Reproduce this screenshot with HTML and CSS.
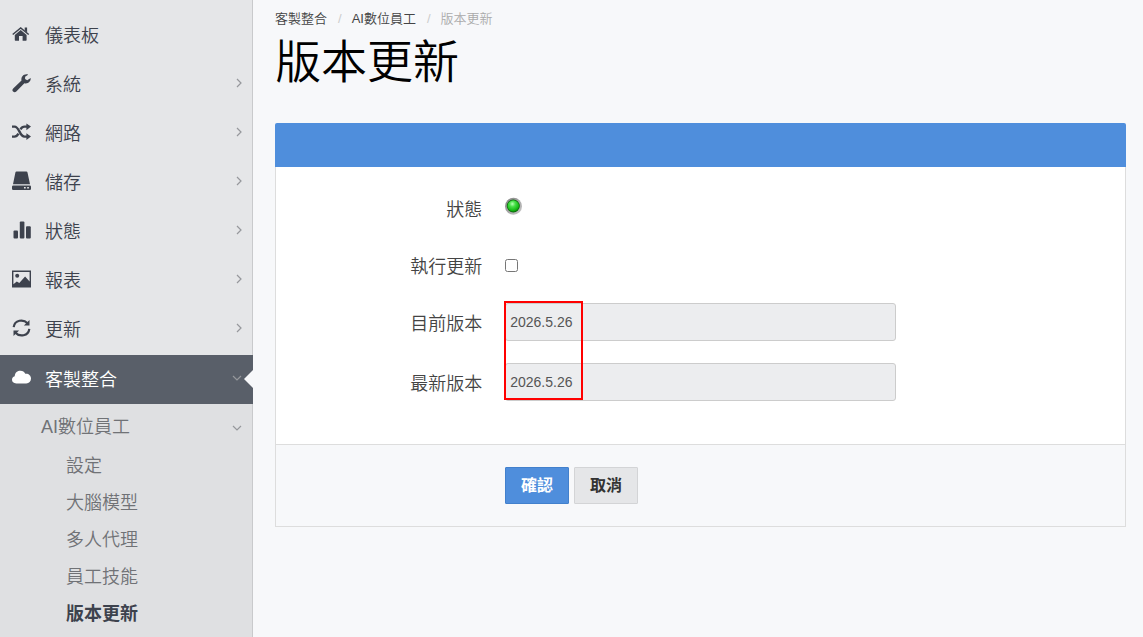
FILE: index.html
```
<!DOCTYPE html>
<html lang="zh-Hant">
<head>
    <meta charset="UTF-8">
    <meta name="viewport" content="width=device-width, initial-scale=1.0">
    <title>版本更新</title>
    <link rel="stylesheet" href="styles.css">
</head>
<body>
    <nav class="sidebar">
        <ul class="menu">
            <li>
                <a href="#">
                    <svg class="icon" viewBox="0 0 20 20"><path d="M2.800 11 8.700 6l5.900 5v5.100q0 .6-.6.600h-3.400v-4.600H7v4.600H3.400q-.6 0-.6-.6z"/><path d="M.700 10.500 8.700 3.900l8 6.600" fill="none" stroke="currentColor" stroke-width="1.500"/><path d="M12.700 3.600h2.400v5l-2.400-2z"/></svg>
                    <span>儀表板</span>
                </a>
            </li>
            <li>
                <a href="#">
                    <svg class="icon" viewBox="0 0 20 20"><path d="M18.700 5.100c.3 3.600-2.800 6.100-6.300 5.200L4.300 18.500c-1 1-2.300 1-3.200.1-.9-.9-.9-2.200.1-3.200l8.300-8C8.700 3.800 11.600.6 15.400 1.200l.7.500-3 2v2.400l2.100 1.200z"/></svg>
                    <span>系統</span>
                    <svg class="angle" viewBox="0 0 10 10"><path d="M3 1l4 4-4 4"/></svg>
                </a>
            </li>
            <li>
                <a href="#">
                    <svg class="icon" viewBox="0 0 20 20"><path d="M0 4.600h2.500C7.500 4.600 7.500 14.600 12.500 14.600H15M0 14.600h2.500c2 0 3-1.300 4-3M8.500 7.300c1-1.700 2-2.700 4-2.700H15" fill="none" stroke="currentColor" stroke-width="2.400"/><path d="M14.400 1.400 19 4.600l-4.600 3.600zM14.400 11.200 19 14.600l-4.600 3.400z"/></svg>
                    <span>網路</span>
                    <svg class="angle" viewBox="0 0 10 10"><path d="M3 1l4 4-4 4"/></svg>
                </a>
            </li>
            <li>
                <a href="#">
                    <svg class="icon" viewBox="0 0 20 20"><path d="M4.500.5h9.800q1 0 1.200 1L18 13.300H1L3.400 1.500q.2-1 1.100-1z"/><path fill-rule="evenodd" d="M1.200 14.600h16.600q1.200 0 1.200 1.200v2q0 1.200-1.200 1.200H1.200Q0 19 0 17.800v-2q0-1.200 1.200-1.200zM12 16v1.600h1.700V16zm3.200 0v1.600h1.700V16z"/></svg>
                    <span>儲存</span>
                    <svg class="angle" viewBox="0 0 10 10"><path d="M3 1l4 4-4 4"/></svg>
                </a>
            </li>
            <li>
                <a href="#">
                    <svg class="icon" viewBox="0 0 20 20"><rect x="1.500" y="10.500" width="4.500" height="8" rx="1"/><rect x="7.800" y="1.500" width="4.600" height="17" rx="1"/><rect x="14" y="6.300" width="4.800" height="12.200" rx="1"/></svg>
                    <span>狀態</span>
                    <svg class="angle" viewBox="0 0 10 10"><path d="M3 1l4 4-4 4"/></svg>
                </a>
            </li>
            <li>
                <a href="#">
                    <svg class="icon" viewBox="0 0 20 20"><path fill-rule="evenodd" d="M0 1.500h19v17H0zM1.400 2.900v12.300l3.400-2.700 2.500 1.600 5.800-6.600 4.500 5V2.900z"/><circle cx="5.200" cy="6.800" r="2"/></svg>
                    <span>報表</span>
                    <svg class="angle" viewBox="0 0 10 10"><path d="M3 1l4 4-4 4"/></svg>
                </a>
            </li>
            <li>
                <a href="#">
                    <svg class="icon" viewBox="0 0 20 20"><path d="M1.700 9.200C2.500 1.800 11.500.8 15.500 5.300M17.300 10.800c-.8 7.400-9.800 8.400-13.800 3.900" fill="none" stroke="currentColor" stroke-width="2.200"/><path d="M17.500 2v5.500h-5.600zM1.500 18v-5.500h5.600z"/></svg>
                    <span>更新</span>
                    <svg class="angle" viewBox="0 0 10 10"><path d="M3 1l4 4-4 4"/></svg>
                </a>
            </li>
            <li class="active">
                <a href="#">
                    <svg class="icon" viewBox="0 0 20 20"><path d="M4.300 15.400C1.500 15.400 0 13.800 0 11.800c0-1.800 1-2.900 2.700-3.500C3 4.500 5.500 2.800 8.400 2.800c2.300 0 4 1.200 4.900 3 3.300-.4 5.700 1.800 5.700 4.800 0 2.800-2 4.800-4.700 4.800z"/></svg>
                    <span>客製整合</span>
                    <svg class="angle" viewBox="0 0 10 10"><path d="M1 3l4 4 4-4"/></svg>
                </a>
            </li>
        </ul>
        <ul class="submenu">
            <li class="group">
                <a href="#">
                    <span>AI數位員工</span>
                    <svg class="angle" viewBox="0 0 10 10"><path d="M1 3l4 4 4-4"/></svg>
                </a>
            </li>
            <li><a href="#">設定</a></li>
            <li><a href="#">大腦模型</a></li>
            <li><a href="#">多人代理</a></li>
            <li><a href="#">員工技能</a></li>
            <li><a class="current" href="#">版本更新</a></li>
        </ul>
    </nav>

    <main class="content">
        <ol class="breadcrumb">
            <li><a href="#">客製整合</a></li>
            <li><a href="#">AI數位員工</a></li>
            <li class="here">版本更新</li>
        </ol>
        <h1>版本更新</h1>

        <form class="panel">
            <div class="panel-head"></div>
            <div class="panel-body">
                <div class="row">
                    <span class="label">狀態</span>
                    <svg class="led" viewBox="0 0 18 18" role="img" aria-label="狀態">
                        <defs>
                            <linearGradient id="ring" x1="0" y1="0" x2="1" y2="1">
                                <stop offset="0" stop-color="#808080"/>
                                <stop offset="1" stop-color="#cccccc"/>
                            </linearGradient>
                            <radialGradient id="bulb" cx=".42" cy=".32" r=".7">
                                <stop offset="0" stop-color="#b4ffb4"/>
                                <stop offset=".35" stop-color="#48e048"/>
                                <stop offset=".8" stop-color="#14b814"/>
                                <stop offset="1" stop-color="#0a860a"/>
                            </radialGradient>
                        </defs>
                        <circle cx="8.500" cy="9.300" r="8.500" fill="url(#ring)"/>
                        <circle cx="8.300" cy="9" r="6.500" fill="#0b6a0b"/>
                        <circle cx="8.300" cy="9" r="5.800" fill="url(#bulb)"/>
                    </svg>
                </div>
                <div class="row">
                    <label class="label" for="update">執行更新</label>
                    <input type="checkbox" id="update">
                </div>
                <div class="versions">
                    <div class="row">
                        <label class="label" for="current">目前版本</label>
                        <input type="text" id="current" value="2026.5.26" readonly>
                    </div>
                    <div class="row">
                        <label class="label" for="latest">最新版本</label>
                        <input type="text" id="latest" value="2026.5.26" readonly>
                    </div>
                    <div class="highlight"></div>
                </div>
            </div>
            <div class="panel-foot">
                <button type="button" class="primary">確認</button>
                <button type="button">取消</button>
            </div>
        </form>
    </main>
</body>
</html>
```
FILE: styles.css
```
:root {
    --blue: #4f8edc;
    --dark: #3d424d;
    --page: #f7f8fa;
    --side: #e5e6e8;
    --line: #dddddd;
}
* {
    box-sizing: border-box;
}
body {
    margin: 0;
    min-height: 100vh;
    display: flex;
    background: var(--page);
    color: #444;
    font-family: "Liberation Sans", "Noto Sans CJK TC", sans-serif;
    font-size: 18px;
    font-weight: 350;
}
a {
    color: inherit;
    text-decoration: none;
}
ul, ol {
    list-style: none;
    margin: 0;
    padding: 0;
}

/* sidebar */
.sidebar {
    flex: 0 0 253px;
    background: #dfe0e2;
    box-shadow: inset -1px 0 #c9cacc;
    color: var(--dark);
}
.menu {
    padding-top: 9px;
    background: var(--side);
    box-shadow: inset -1px 0 #c9cacc;
}
.menu a {
    display: flex;
    align-items: center;
    height: 49px;
    padding: 0 9px 0 12px;
}
.icon {
    width: 20px;
    height: 20px;
    margin-right: 13px;
    fill: currentColor;
}
.angle {
    width: 10px;
    height: 10px;
    margin-left: auto;
    fill: none;
    stroke: #96989c;
    stroke-width: 1.2;
}
.menu .active {
    position: relative;
    margin-top: 3px;
    background: #595f69;
    color: #fff;
}
.menu .active a {
    padding: 0 11px 4px 12px;
}
.menu .active::after {
    content: "";
    position: absolute;
    right: 0;
    top: 15px;
    border: 9px solid transparent;
    border-left: 0;
    border-right-color: var(--page);
}
.submenu {
    padding: 6px 0 4px;
    color: #707276;
    line-height: 37px;
}
.submenu a {
    display: flex;
    align-items: center;
    padding: 0 11px 0 66px;
}
.submenu .group a {
    height: 38px;
    padding: 0 11px 3px 41px;
}
.submenu .current {
    color: var(--dark);
    font-weight: bold;
}

/* page */
.content {
    flex: 1;
    padding: 9px 17px 22px 22px;
}
.breadcrumb {
    display: flex;
    font-size: 13px;
    line-height: 20px;
}
.breadcrumb li + li::before {
    content: "/";
    padding: 0 10px 0 11px;
    color: #ccc;
}
.breadcrumb .here {
    color: #aaa;
}
h1 {
    margin: 0 0 28px;
    color: #000;
    font-size: 46px;
    font-weight: 350;
    line-height: 66px;
}
.panel-head {
    height: 44px;
    background: var(--blue);
    border-radius: 2px 2px 0 0;
}
.panel-body {
    padding: 22px 0 21px;
    background: #fff;
    border: 1px solid var(--line);
    border-top: 0;
}
.row {
    display: grid;
    grid-template-columns: 27% 46%;
    align-items: center;
    min-height: 38px;
    margin-bottom: 19px;
}
.versions .row {
    margin-bottom: 22px;
}
.label {
    padding-right: 23px;
    text-align: right;
}
.led {
    width: 18px;
    height: 18px;
    margin-bottom: 4px;
}
input[type="checkbox"] {
    width: 13px;
    height: 13px;
    margin: 0;
}
input[type="text"] {
    width: 100%;
    height: 38px;
    padding: 0 4px;
    background: #ecedef;
    border: 1px solid #ccc;
    border-radius: 3px;
    color: #555;
    font-family: inherit;
    font-size: 14px;
}
.versions {
    position: relative;
}
.highlight {
    position: absolute;
    left: 27%;
    top: -2px;
    width: 79px;
    height: 99px;
    margin-left: -1px;
    border: 2px solid #f00;
    pointer-events: none;
}
.panel-foot {
    display: flex;
    gap: 5px;
    padding: 22px 26.9%;
    border: 1px solid var(--line);
    border-top: 0;
}
button {
    height: 37px;
    padding: 0 15px 3px;
    background: #e5e6e8;
    border: 1px solid #d3d4d6;
    border-radius: 1px;
    color: #333;
    font-family: inherit;
    font-size: 16px;
    font-weight: bold;
    cursor: pointer;
}
button.primary {
    background: var(--blue);
    border-color: #4280cc;
    color: #fff;
}
```
